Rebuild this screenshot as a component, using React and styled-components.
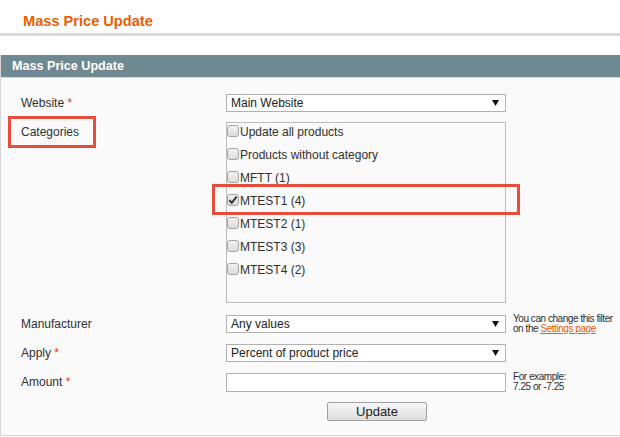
import React from "react";
import styled, { createGlobalStyle } from "styled-components";

const categories = [
  { name: "Update all products" },
  { name: "Products without category" },
  { name: "MFTT (1)" },
  { name: "MTEST1 (4)", checked: true, marked: true },
  { name: "MTEST2 (1)" },
  { name: "MTEST3 (3)" },
  { name: "MTEST4 (2)" },
];

const Arrow = () => (
  <svg width="7" height="6" viewBox="0 0 7 6">
    <path d="M0 0 H7 L3.5 6 Z" fill="#111" />
  </svg>
);

const Check = () => (
  <svg width="12" height="12" viewBox="0 0 12 12">
    <path d="M2.3 6.2 L4.8 8.8 L9.6 2.6" fill="none" stroke="#333" strokeWidth="2" />
  </svg>
);

const App = () => {
  return (
    <>
      <GlobalStyle />
      <PageHeader>
        <Title>Mass Price Update</Title>
      </PageHeader>
      <Fieldset>
        <Legend>Mass Price Update</Legend>
        <Form>
          <Row $top={16} $height={18}>
            <Label>
              Website <Req>*</Req>
            </Label>
            <Select>
              Main Website
              <Arrow />
            </Select>
          </Row>

          <Row $top={10} $start>
            <Label $marked $offset={3}>
              Categories
            </Label>
            <CheckList>
              {categories.map((c) => (
                <CheckRow key={c.name} $marked={c.marked}>
                  <Box>{c.checked && <Check />}</Box>
                  <span>{c.name}</span>
                </CheckRow>
              ))}
            </CheckList>
          </Row>

          <Row $top={11} $height={20}>
            <Label>Manufacturer</Label>
            <Select>
              Any values
              <Arrow />
            </Select>
            <Hint>
              You can change this filter
              <br />
              on the <a href="#settings">Settings page</a>
            </Hint>
          </Row>

          <Row $top={10} $height={18}>
            <Label>
              Apply <Req>*</Req>
            </Label>
            <Select>
              Percent of product price
              <Arrow />
            </Select>
          </Row>

          <Row $top={10} $height={20}>
            <Label>
              Amount <Req>*</Req>
            </Label>
            <Input />
            <Hint>
              For example:
              <br />
              7.25 or -7.25
            </Hint>
          </Row>

          <Row $top={10} $height={19}>
            <span />
            <Button>Update</Button>
          </Row>
        </Form>
      </Fieldset>
    </>
  );
};

export default App;

const GlobalStyle = createGlobalStyle`
  body {
    margin: 0;
    background: #fff;
    font-family: "Liberation Sans", Arial, sans-serif;
    color: #2f2f2f;
    overflow: hidden;
  }
`;

const PageHeader = styled.div`
  padding: 14px 0 4px 23px;

  border-bottom: 3px solid #dcdcdc;
`;

const Title = styled.h3`
  margin: 0;

  font-size: 14.6px;
  line-height: 15px;
  font-weight: 700;
  color: #eb5e00;
`;

const Fieldset = styled.div`
  width: 622px;
  margin-top: 19px;

  background: #fafafa;

  border: 1px solid #d6d6d6;
  border-top: none;
  box-sizing: border-box;
`;

const Legend = styled.div`
  height: 22px;
  padding-left: 11px;

  background: #6f8992;
  border-bottom: 1px solid #d6d6d6;

  font-size: 12.6px;
  font-weight: 700;
  line-height: 22px;
  color: #fff;
`;

const Form = styled.div`
  padding: 0 0 14px 20px;
`;

const Row = styled.div`
  display: grid;
  grid-template-columns: 205px 280px 1fr;
  align-items: ${({ $start }) => ($start ? "start" : "center")};

  margin-top: ${({ $top }) => $top}px;
  height: ${({ $height }) => ($height ? `${$height}px` : "auto")};
`;

const Label = styled.label`
  position: relative;
  align-self: ${({ $offset }) => ($offset ? "start" : "center")};

  margin-top: ${({ $offset }) => $offset || 0}px;

  font-size: 12px;
  line-height: 14px;
  color: #303030;

  ${({ $marked }) =>
    $marked &&
    `
    &::after {
      content: "";
      position: absolute;
      left: -13px;
      top: -9px;
      width: 88px;
      height: 32px;
      border: 3px solid #e74c3c;
      box-sizing: border-box;
    }
  `}
`;

const Req = styled.span`
  color: #eb340a;
`;

const Select = styled.div`
  display: flex;
  justify-content: space-between;
  align-items: center;

  height: 18px;
  padding: 0 6px 0 4px;

  background: #fff;
  border: 1px solid #b1b1b1;
  box-sizing: border-box;

  font-size: 12px;
  color: #222;
`;

const Input = styled.div`
  height: 19px;

  background: #fff;
  border: 1px solid #b1b1b1;
  box-sizing: border-box;
`;

const CheckList = styled.div`
  height: 181px;
  padding-top: 1px;

  background: #fafafa;
  border: 1px solid #bdbdbd;
  box-sizing: border-box;
`;

const CheckRow = styled.div`
  position: relative;

  display: flex;
  align-items: flex-start;

  height: 23px;

  font-size: 12px;
  line-height: 14px;
  color: #2f2f2f;

  span {
    padding-top: 1px;
    margin-left: 1px;
  }

  ${({ $marked }) =>
    $marked &&
    `
    &::after {
      content: "";
      position: absolute;
      left: -15px;
      top: -9px;
      width: 308px;
      height: 31px;
      border: 3px solid #e74c3c;
      box-sizing: border-box;
    }
  `}
`;

const Box = styled.div`
  display: flex;

  width: 12px;
  height: 12px;
  margin-top: 1px;

  background: linear-gradient(#f2f2f2, #dcdcdc);
  border: 1px solid #a3a3a3;
  border-radius: 3px;
  box-sizing: border-box;

  svg {
    margin: -1px;
  }
`;

const Hint = styled.div`
  margin-left: 7px;

  font-size: 10px;
  line-height: 10px;
  letter-spacing: -0.45px;
  color: #2f2f2f;

  a {
    color: #eb5e00;
    text-decoration: underline;
  }
`;

const Button = styled.button`
  width: 100px;
  height: 19px;
  margin-left: 101px;
  padding: 0;

  background: linear-gradient(#f7f7f7, #dedede);
  border: 1px solid #a0a0a0;
  border-radius: 2px;

  font-family: "Liberation Sans", Arial, sans-serif;
  font-size: 13px;
  line-height: 17px;
  color: #222;
`;
